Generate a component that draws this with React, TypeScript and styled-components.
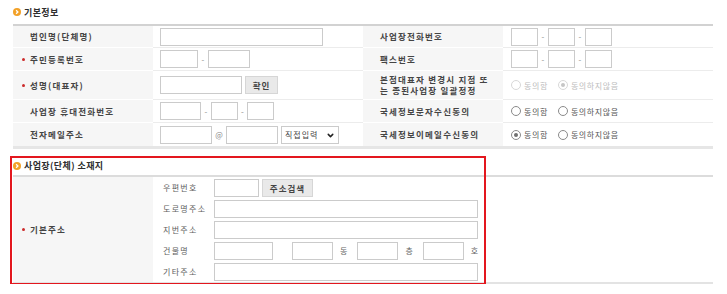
import styled, { createGlobalStyle } from "styled-components";
import { ChevronDown } from "lucide-react";

const GlobalStyle = createGlobalStyle`
  body {
    margin: 0;
    background: #fff;
    font-family: "Noto Sans CJK KR", "Noto Sans", sans-serif;
  }
  * { box-sizing: border-box; }
`;

const Page = styled.div`
  width: 727px;
  padding: 0 14px 0 13px;
`;

const SectionTitle = styled.h2<{ h: number }>`
  margin: 0;
  height: ${(p) => p.h}px;
  display: flex;
  align-items: center;
  gap: 3px;
  font-size: 9px;
  font-weight: 700;
  color: #2e2e2e;
  letter-spacing: 0.4px;
`;

const InfoGrid = styled.div`
  display: grid;
  grid-template-columns: 140px 210px 140px 210px;
  grid-template-rows: 22px 23px 29px 23px 23px;
  border-top: 2px solid #d2d2d2;
  border-bottom: 3px solid #e6e6e6;
`;

const Th = styled.div<{ last?: boolean }>`
  display: flex;
  align-items: center;
  padding-left: 17px;
  background: #f6f6f6;
  border-bottom: ${(p) => (p.last ? "none" : "1px solid #fff")};
  font-size: 8.5px;
  font-weight: 700;
  color: #444;
  letter-spacing: 1.2px;
  line-height: 11px;
`;

const Td = styled.div<{ last?: boolean; pad?: number }>`
  display: flex;
  align-items: center;
  padding-left: ${(p) => p.pad ?? 7}px;
  border-bottom: ${(p) => (p.last ? "none" : "1px solid #ececec")};
`;

const Bullet = styled.span`
  display: inline-block;
  width: 3px;
  height: 3px;
  border-radius: 50%;
  background: #cc2b2b;
  margin-left: -8px;
  margin-right: 5px;
`;

const Field = styled.input<{ w: number }>`
  width: ${(p) => p.w}px;
  height: 18px;
  margin: 0;
  padding: 0 3px;
  border: 1px solid #cbcbcb;
  background: #fff;
  font-size: 9px;
  outline: none;
  flex: none;
`;

const Sep = styled.span<{ w: number }>`
  width: ${(p) => p.w}px;
  text-align: center;
  font-size: 8px;
  color: #888;
  flex: none;
`;

const SmallButton = styled.button<{ w: number }>`
  width: ${(p) => p.w}px;
  height: 18px;
  margin: 0 0 0 3px;
  padding: 0;
  border: 1px solid #d6d6d6;
  border-radius: 0;
  background: #e9e9e9;
  font-family: inherit;
  font-size: 8.5px;
  font-weight: 700;
  color: #444;
  letter-spacing: 1px;
`;

const SelectWrap = styled.div`
  position: relative;
  width: 58px;
  height: 18px;
  margin-left: 3px;
  flex: none;
  svg {
    position: absolute;
    right: 4px;
    top: 5px;
    pointer-events: none;
  }
`;

const Select = styled.select`
  display: block;
  appearance: none;
  width: 100%;
  height: 100%;
  margin: 0;
  padding: 0 0 0 3px;
  border: 1px solid #cbcbcb;
  border-radius: 0;
  background: #fff;
  font-family: inherit;
  font-size: 8px;
  color: #444;
  letter-spacing: 1px;
`;

const RadioGroup = styled.div`
  display: flex;
  align-items: center;
  gap: 10px;
`;

const RadioOption = styled.label<{ disabled?: boolean }>`
  display: flex;
  align-items: center;
  gap: 3px;
  font-size: 8px;
  letter-spacing: 0.6px;
  color: ${(p) => (p.disabled ? "#bdbdbd" : "#555")};
`;

const RadioMark = styled.span<{ checked?: boolean; disabled?: boolean }>`
  width: 10px;
  height: 10px;
  border-radius: 50%;
  border: 1px solid ${(p) => (p.disabled ? "#d8d8d8" : "#8a8a8a")};
  background: #fff;
  display: flex;
  align-items: center;
  justify-content: center;
  &::after {
    content: "";
    width: 4px;
    height: 4px;
    border-radius: 50%;
    background: ${(p) =>
      p.checked ? (p.disabled ? "#c6c6c6" : "#707070") : "transparent"};
  }
`;

const AddressSection = styled.section`
  position: relative;
  margin-top: 7px;
`;

const Highlight = styled.div`
  position: absolute;
  left: -3px;
  top: 0;
  width: 476px;
  height: 129px;
  border: 2px solid #e3171e;
  pointer-events: none;
`;

const AddressGrid = styled.div`
  display: grid;
  grid-template-columns: 140px 61px 1fr;
  grid-template-rows: repeat(5, 21px);
  border-top: 2px solid #dcdcdc;
  border-bottom: 2px solid #e3e3e3;
`;

const AddressTh = styled(Th)`
  grid-row: 1 / span 5;
  border-bottom: none;
`;

const SubLabel = styled.div`
  display: flex;
  align-items: center;
  padding-left: 10px;
  font-size: 8px;
  color: #5e5e5e;
  letter-spacing: 1.3px;
`;

const SubValue = styled.div`
  display: flex;
  align-items: center;
`;

const UnitText = styled.span<{ after?: number }>`
  margin: 0 ${(p) => p.after ?? 10}px 0 7px;
  font-size: 8px;
  color: #666;
`;

function TitleIcon() {
  return (
    <svg width="8" height="8" viewBox="0 0 8 8">
      <circle cx="4" cy="4" r="4" fill="#f2a128" />
      <path d="M3.1 2.2 L4.9 4 L3.1 5.8" fill="none" stroke="#fff" strokeWidth="1.3" />
    </svg>
  );
}

type Choice = "yes" | "no" | "none";

function Radio({ label, checked, disabled }: { label: string; checked?: boolean; disabled?: boolean }) {
  return (
    <RadioOption disabled={disabled}>
      <RadioMark checked={checked} disabled={disabled} />
      {label}
    </RadioOption>
  );
}

function Agree({ checked, disabled }: { checked: Choice; disabled?: boolean }) {
  return (
    <RadioGroup>
      <Radio label="동의함" checked={checked === "yes"} disabled={disabled} />
      <Radio label="동의하지않음" checked={checked === "no"} disabled={disabled} />
    </RadioGroup>
  );
}

function App() {
  return (
    <Page>
      <GlobalStyle />
      <SectionTitle h={24}>
        <TitleIcon />
        기본정보
      </SectionTitle>
      <InfoGrid>
        <Th>법인명(단체명)</Th>
        <Td>
          <Field w={163} />
        </Td>
        <Th>사업장전화번호</Th>
        <Td pad={8}>
          <Field w={27} />
          <Sep w={10}>-</Sep>
          <Field w={27} />
          <Sep w={10}>-</Sep>
          <Field w={27} />
        </Td>

        <Th>
          <Bullet />
          주민등록번호
        </Th>
        <Td>
          <Field w={38} />
          <Sep w={10}>-</Sep>
          <Field w={42} />
        </Td>
        <Th>팩스번호</Th>
        <Td pad={8}>
          <Field w={27} />
          <Sep w={10}>-</Sep>
          <Field w={27} />
          <Sep w={10}>-</Sep>
          <Field w={27} />
        </Td>

        <Th>
          <Bullet />
          성명(대표자)
        </Th>
        <Td>
          <Field w={82} />
          <SmallButton w={33}>확인</SmallButton>
        </Td>
        <Th>
          본점대표자 변경시 지점 또
          <br />는 종된사업장 일괄정정
        </Th>
        <Td pad={8}>
          <Agree checked="no" disabled />
        </Td>

        <Th>사업장 휴대전화번호</Th>
        <Td>
          <Field w={41} />
          <Sep w={10}>-</Sep>
          <Field w={27} />
          <Sep w={9}>-</Sep>
          <Field w={27} />
        </Td>
        <Th>국세정보문자수신동의</Th>
        <Td pad={8}>
          <Agree checked="none" />
        </Td>

        <Th last>전자메일주소</Th>
        <Td last>
          <Field w={52} />
          <Sep w={14}>@</Sep>
          <Field w={52} />
          <SelectWrap>
            <Select defaultValue="direct">
              <option value="direct">직접입력</option>
            </Select>
            <ChevronDown size={9} strokeWidth={4} color="#222" />
          </SelectWrap>
        </Td>
        <Th last>국세정보이메일수신동의</Th>
        <Td last pad={8}>
          <Agree checked="yes" />
        </Td>
      </InfoGrid>

      <AddressSection>
        <SectionTitle h={19}>
          <TitleIcon />
          사업장(단체) 소재지
        </SectionTitle>
        <AddressGrid>
          <AddressTh>
            <Bullet />
            기본주소
          </AddressTh>

          <SubLabel>우편번호</SubLabel>
          <SubValue>
            <Field w={45} />
            <SmallButton w={51}>주소검색</SmallButton>
          </SubValue>

          <SubLabel>도로명주소</SubLabel>
          <SubValue>
            <Field w={264} />
          </SubValue>

          <SubLabel>지번주소</SubLabel>
          <SubValue>
            <Field w={264} />
          </SubValue>

          <SubLabel>건물명</SubLabel>
          <SubValue>
            <Field w={59} />
            <Sep w={19} />
            <Field w={41} />
            <UnitText>동</UnitText>
            <Field w={41} />
            <UnitText>층</UnitText>
            <Field w={41} />
            <UnitText after={0}>호</UnitText>
          </SubValue>

          <SubLabel>기타주소</SubLabel>
          <SubValue>
            <Field w={264} />
          </SubValue>
        </AddressGrid>
        <Highlight />
      </AddressSection>
    </Page>
  );
}

export default App;
